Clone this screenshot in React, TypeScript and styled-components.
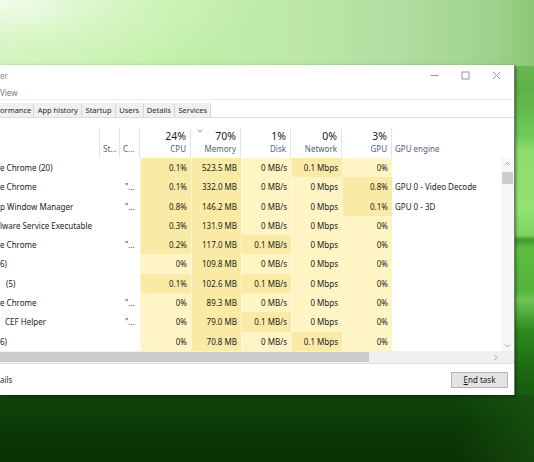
import React from "react";
import styled, { createGlobalStyle } from "styled-components";

const FONT = `"Noto Sans", "DejaVu Sans", sans-serif`;

const GlobalStyle = createGlobalStyle`
  html, body {
    margin: 0;
    padding: 0;
  }
  body {
    font-family: ${FONT};
  }
`;

// column layout shared by header and rows
const COLS = "100px 20px 20px 51px 50px 50px 51px 50px 109px";

const HEAT = {
  none: "transparent",
  low: "#fff4c4",
  mid: "#f9eba6",
};

type Heat = keyof typeof HEAT;

const Desktop = styled.div`
  width: 534px;
  height: 462px;
  overflow: hidden;
  box-sizing: border-box;
  padding-top: 65px;
  background:
    radial-gradient(ellipse 260px 90px at 0 0, rgba(246, 252, 240, 0.95) 0%, rgba(225, 248, 210, 0.6) 45%, rgba(210, 245, 190, 0) 100%) 0 0 / 534px 66px no-repeat,
    linear-gradient(to right, #caf4b4 0%, #c0f0a6 30%, #bde8aa 55%, #b0dda0 75%, #a0d28c 92%, #8cc676 100%) 0 0 / 534px 66px no-repeat,
    linear-gradient(to right, rgba(0, 0, 0, 0) 85%, rgba(40, 110, 25, 0.35) 100%) 0 395px / 534px 67px no-repeat,
    linear-gradient(to bottom, #0f4409 0%, #0b3a06 45%, #0a3104 100%) 0 395px / 534px 67px no-repeat,
    linear-gradient(
      to bottom,
      #8cc877 0px,
      #5eb148 90px,
      #6fc957 135px,
      #8ddd6d 150px,
      #93e372 210px,
      #7fd45f 235px,
      #3f9a2b 240px,
      #5cbf40 248px,
      #54b23a 290px,
      #6fc355 300px,
      #2f8a1f 330px,
      #1d6814 370px,
      #155a0e 400px
    );
`;

const Window = styled.div`
  width: 514px;
  height: 330px;
  background: #fff;
  display: flex;
  flex-direction: column;
  box-shadow: 1px 0 0 #6f7f6a, 2px 1px 3px rgba(0, 0, 0, 0.45);
  font-family: ${FONT};
  font-size: 8px;
  color: #1b1b1b;
`;

const TitleBar = styled.div`
  height: 21px;
  display: flex;
  align-items: center;
  justify-content: space-between;
  padding-right: 2px;
`;

const Title = styled.span`
  color: #8a8a8a;
  font-size: 8px;
`;

const Captions = styled.div`
  display: flex;
  height: 100%;
`;

const CaptionButton = styled.div`
  width: 31px;
  height: 100%;
  display: flex;
  align-items: center;
  justify-content: center;
`;

const MenuBar = styled.div`
  height: 13px;
  border-bottom: 1px solid #ececec;
  display: flex;
  align-items: center;
  color: #7a7a7a;
`;

const TabStrip = styled.div`
  height: 14px;
  padding-top: 3px;
  border-bottom: 1px solid #dcdcdc;
  display: flex;
`;

const Tab = styled.div<{ $first?: boolean }>`
  height: 14px;
  padding: 0 ${({ $first }) => ($first ? "2px 0 0" : "3.3px")};
  display: flex;
  align-items: center;
  background: #f0f0f0;
  border-right: 1px solid #d6d6d6;
  color: #2a2a2a;
  font-size: 7.5px;
  white-space: nowrap;
`;

const TableArea = styled.div`
  display: grid;
  grid-template-columns: 501px 13px;
  grid-template-rows: 40px 193px 12px;
`;

const HeaderRow = styled.div`
  grid-column: 1 / -1;
  display: grid;
  grid-template-columns: ${COLS} 13px;
  padding-top: 10px;
  box-sizing: border-box;
`;

const HeadCell = styled.div<{ $align?: "left" | "right"; $sep?: boolean }>`
  position: relative;
  display: flex;
  flex-direction: column;
  justify-content: flex-end;
  align-items: ${({ $align }) => ($align === "left" ? "flex-start" : "flex-end")};
  padding: 0 ${({ $align }) => ($align === "left" ? "0 0 3px" : "4px 0 0")};
  border-right: ${({ $sep }) => ($sep ? "1px solid #e4e4e4" : "none")};
  padding-bottom: 3px;
  box-sizing: border-box;
`;

const HeadPct = styled.span`
  font-size: 10.5px;
  line-height: 14px;
  color: #1b1b1b;
`;

const HeadLabel = styled.span`
  font-size: 8px;
  line-height: 12px;
  color: #4f5f78;
  white-space: nowrap;
`;

const SortMark = styled.svg`
  position: absolute;
  left: 6px;
  top: 1px;
`;

const Body = styled.div`
  display: flex;
  flex-direction: column;
`;

const Row = styled.div`
  display: grid;
  grid-template-columns: ${COLS};
  height: 19.3px;
  line-height: 19.3px;
`;

const NameCell = styled.div<{ $indent: number }>`
  padding-left: ${({ $indent }) => $indent}px;
  white-space: nowrap;
  overflow: hidden;
  color: #1b1b1b;
`;

const TextCell = styled.div`
  padding-left: 5px;
  color: #333;
  white-space: nowrap;
`;

const ValueCell = styled.div<{ $heat: Heat }>`
  background: ${({ $heat }) => HEAT[$heat]};
  box-shadow: inset 1px 0 0 rgba(255, 255, 255, 0.45);
  text-align: right;
  padding-right: 4px;
  white-space: nowrap;
`;

const EngineCell = styled.div`
  padding-left: 3px;
  white-space: nowrap;
`;

const VScroll = styled.div`
  background: #f7f7f7;
  display: flex;
  flex-direction: column;
`;

const ArrowButton = styled.div<{ $h?: number; $w?: number }>`
  height: ${({ $h }) => $h ?? 12}px;
  width: ${({ $w }) => ($w ? `${$w}px` : "auto")};
  display: flex;
  align-items: center;
  justify-content: center;
  flex-shrink: 0;
`;

const VTrack = styled.div`
  flex: 1;
  padding: 2px 1px 0;
`;

const VThumb = styled.div`
  height: 12px;
  background: #cdcdcd;
`;

const HScroll = styled.div`
  display: flex;
  background: #f0f0f0;
`;

const HThumb = styled.div`
  width: 369px;
  height: 10px;
  margin-top: 1px;
  background: #cdcdcd;
`;

const HTrack = styled.div`
  flex: 1;
`;

const Corner = styled.div`
  background: #f0f0f0;
`;

const Footer = styled.div`
  flex: 1;
  border-top: 1px solid #dedede;
  display: flex;
  align-items: center;
  justify-content: space-between;
  padding-right: 6px;
`;

const DetailsLink = styled.span`
  color: #2b2b2b;
  font-size: 8px;
`;

const EndTask = styled.div`
  width: 57px;
  height: 16px;
  box-sizing: border-box;
  border: 1px solid #b3b3b3;
  background: #e3e3e3;
  display: flex;
  align-items: center;
  justify-content: center;
  color: #1b1b1b;
  font-size: 8px;
  u {
    text-decoration-thickness: 1px;
    text-underline-offset: 1px;
  }
`;

type Proc = {
  name: string;
  indent: number;
  cmd: boolean;
  cpu: string;
  mem: string;
  disk: string;
  net: string;
  gpu: string;
  engine?: string;
};

const PROCS: Proc[] = [
  { name: "e Chrome (20)", indent: 0, cmd: false, cpu: "0.1%", mem: "523.5 MB", disk: "0 MB/s", net: "0.1 Mbps", gpu: "0%" },
  { name: "e Chrome", indent: 0, cmd: true, cpu: "0.1%", mem: "332.0 MB", disk: "0 MB/s", net: "0 Mbps", gpu: "0.8%", engine: "GPU 0 - Video Decode" },
  { name: "p Window Manager", indent: 0, cmd: true, cpu: "0.8%", mem: "146.2 MB", disk: "0 MB/s", net: "0 Mbps", gpu: "0.1%", engine: "GPU 0 - 3D" },
  { name: "lware Service Executable", indent: 0, cmd: false, cpu: "0.3%", mem: "131.9 MB", disk: "0 MB/s", net: "0 Mbps", gpu: "0%" },
  { name: "e Chrome", indent: 0, cmd: true, cpu: "0.2%", mem: "117.0 MB", disk: "0.1 MB/s", net: "0 Mbps", gpu: "0%" },
  { name: "6)", indent: 0, cmd: false, cpu: "0%", mem: "109.8 MB", disk: "0 MB/s", net: "0 Mbps", gpu: "0%" },
  { name: "(5)", indent: 6, cmd: false, cpu: "0.1%", mem: "102.6 MB", disk: "0.1 MB/s", net: "0 Mbps", gpu: "0%" },
  { name: "e Chrome", indent: 0, cmd: true, cpu: "0%", mem: "89.3 MB", disk: "0 MB/s", net: "0 Mbps", gpu: "0%" },
  { name: "CEF Helper", indent: 5, cmd: true, cpu: "0%", mem: "79.0 MB", disk: "0.1 MB/s", net: "0 Mbps", gpu: "0%" },
  { name: "6)", indent: 0, cmd: false, cpu: "0%", mem: "70.8 MB", disk: "0 MB/s", net: "0.1 Mbps", gpu: "0%" },
];

// zero values get the pale shade, anything else the stronger one
const heatOf = (v: string): Heat => (/^0(\s|%)/.test(v) ? "low" : "mid");

function Chevron({ dir }: { dir: "up" | "down" | "right" }) {
  const d =
    dir === "up" ? "M1 4 L3.5 1.5 L6 4" : dir === "down" ? "M1 1.5 L3.5 4 L6 1.5" : "M1.5 1 L4 3.5 L1.5 6";
  const w = dir === "right" ? 6 : 7;
  const h = dir === "right" ? 7 : 5.5;
  return (
    <svg width={w} height={h} viewBox={`0 0 ${w} ${h}`}>
      <path d={d} fill="none" stroke="#a0a0a0" strokeWidth="1" />
    </svg>
  );
}

const HEADERS = [
  { pct: "24%", label: "CPU" },
  { pct: "70%", label: "Memory", sorted: true },
  { pct: "1%", label: "Disk" },
  { pct: "0%", label: "Network" },
  { pct: "3%", label: "GPU" },
];

export default function App() {
  return (
    <>
      <GlobalStyle />
      <Desktop>
        <Window>
          <TitleBar>
            <Title>er</Title>
            <Captions>
              <CaptionButton>
                <svg width="9" height="9" viewBox="0 0 9 9">
                  <path d="M0.5 4.5 H8.5" stroke="#9a9a9a" strokeWidth="1" />
                </svg>
              </CaptionButton>
              <CaptionButton>
                <svg width="9" height="9" viewBox="0 0 9 9">
                  <rect x="1" y="1" width="7" height="7" fill="none" stroke="#9a9a9a" strokeWidth="1" />
                </svg>
              </CaptionButton>
              <CaptionButton>
                <svg width="9" height="9" viewBox="0 0 9 9">
                  <path d="M1 1 L8 8 M8 1 L1 8" stroke="#9a9a9a" strokeWidth="1" />
                </svg>
              </CaptionButton>
            </Captions>
          </TitleBar>

          <MenuBar>View</MenuBar>

          <TabStrip>
            <Tab $first>ormance</Tab>
            <Tab>App history</Tab>
            <Tab>Startup</Tab>
            <Tab>Users</Tab>
            <Tab>Details</Tab>
            <Tab>Services</Tab>
          </TabStrip>

          <TableArea>
            <HeaderRow>
              <HeadCell $sep />
              <HeadCell $align="left" $sep>
                <HeadLabel>St...</HeadLabel>
              </HeadCell>
              <HeadCell $align="left" $sep>
                <HeadLabel>C...</HeadLabel>
              </HeadCell>
              {HEADERS.map((h) => (
                <HeadCell key={h.label} $sep>
                  {h.sorted && (
                    <SortMark width="6" height="4" viewBox="0 0 6 4">
                      <path d="M0.5 0.8 L3 3.2 L5.5 0.8" fill="none" stroke="#7d7d7d" strokeWidth="0.9" />
                    </SortMark>
                  )}
                  <HeadPct>{h.pct}</HeadPct>
                  <HeadLabel>{h.label}</HeadLabel>
                </HeadCell>
              ))}
              <HeadCell $align="left">
                <HeadLabel>GPU engine</HeadLabel>
              </HeadCell>
              <HeadCell />
            </HeaderRow>

            <Body>
              {PROCS.map((p, i) => (
                <Row key={i}>
                  <NameCell $indent={p.indent}>{p.name}</NameCell>
                  <TextCell />
                  <TextCell>{p.cmd ? "\"..." : ""}</TextCell>
                  <ValueCell $heat={heatOf(p.cpu)}>{p.cpu}</ValueCell>
                  <ValueCell $heat="mid">{p.mem}</ValueCell>
                  <ValueCell $heat={heatOf(p.disk)}>{p.disk}</ValueCell>
                  <ValueCell $heat={heatOf(p.net)}>{p.net}</ValueCell>
                  <ValueCell $heat={heatOf(p.gpu)}>{p.gpu}</ValueCell>
                  <EngineCell>{p.engine ?? ""}</EngineCell>
                </Row>
              ))}
            </Body>

            <VScroll>
              <ArrowButton>
                <Chevron dir="up" />
              </ArrowButton>
              <VTrack>
                <VThumb />
              </VTrack>
              <ArrowButton $h={10}>
                <Chevron dir="down" />
              </ArrowButton>
            </VScroll>

            <HScroll>
              <HThumb />
              <HTrack />
              <ArrowButton $h={12} $w={10}>
                <Chevron dir="right" />
              </ArrowButton>
            </HScroll>
            <Corner />
          </TableArea>

          <Footer>
            <DetailsLink>ails</DetailsLink>
            <EndTask>
              <span>
                <u>E</u>nd task
              </span>
            </EndTask>
          </Footer>
        </Window>
      </Desktop>
    </>
  );
}
